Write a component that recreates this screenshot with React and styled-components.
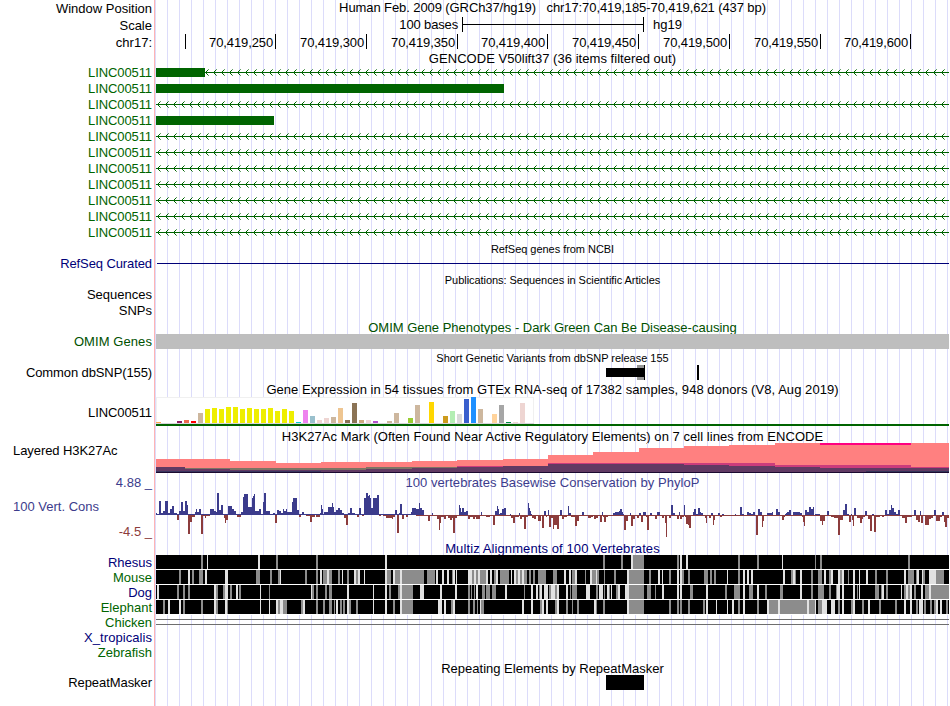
import React from "react";
import styled, { createGlobalStyle } from "styled-components";

const GlobalStyle = createGlobalStyle`
  body { margin: 0; background: #fff; }
`;

const Browser = styled.main`
  width: 950px;
  height: 706px;
  overflow: hidden;
  background: #fff;
  color: #000;
  font: 13px "Liberation Sans", Arial, sans-serif;
  white-space: pre;
`;

const Row = styled.section`
  display: grid;
  grid-template-columns: 155px 794px;
  grid-template-rows: ${(p) => p.$h}px;
  height: ${(p) => p.$h}px;
`;

const LabelCell = styled.div`
  display: flex;
  flex-direction: column;
  box-sizing: border-box;
  justify-content: ${(p) => p.$justify || "center"};
  align-items: ${(p) => (p.$left ? "flex-start" : "flex-end")};
  border-right: 1px solid #ffb4b4;
  padding: ${(p) => p.$top || 0}px 2px ${(p) => p.$bottom || 0}px 13px;
  color: ${(p) => p.$color || "#000"};
`;

const Label = styled.span`
  line-height: 15px;
  letter-spacing: ${(p) => p.$ls ?? 0}px;
  color: ${(p) => p.$color || "inherit"};
  align-self: ${(p) => p.$align || "auto"};
`;

const TrackCell = styled.div`
  display: flex;
  align-items: center;
  justify-content: center;
  padding-left: 1px;
  min-width: 0;
  background: linear-gradient(to right, #dcdcfa 1px, transparent 1px) 12px 0 / 12px 100%;
`;

const Title = styled.h2`
  margin: ${(p) => p.$shift ?? 0}px 0 0;
  font-size: ${(p) => (p.$small ? 11 : 13)}px;
  font-weight: 400;
  line-height: 15px;
  letter-spacing: ${(p) => p.$ls ?? 0}px;
  color: ${(p) => p.$color || "#000"};
`;

const Drawing = styled.svg`
  display: block;
  flex: none;
  width: 793px;
  height: ${(p) => p.$h}px;
  shape-rendering: crispEdges;
`;

const ScaleBar = styled.div`
  display: grid;
  grid-template-columns: 302px 182px auto;
  column-gap: 4px;
  width: 793px;
  height: 17px;
  line-height: 16px;
`;

const ScaleText = styled.span`
  text-align: ${(p) => p.$align};
  padding-left: ${(p) => p.$pad || 0}px;
  letter-spacing: ${(p) => p.$ls ?? 0}px;
`;

const Ruler = styled.div`
  display: grid;
  grid-template-columns: 30px 90px 91px 91px 90px 91px 91px 91px 90px;
  width: 793px;
  height: 17px;
`;

const Tick = styled.span`
  height: 15px;
  line-height: 17px;
  padding-right: 2px;
  border-right: 1px solid #000;
  text-align: right;
  letter-spacing: -0.12px;
`;

function Track({ h, label, color, ls, bottom, children }) {
  return (
    <Row $h={h}>
      <LabelCell $color={color} $bottom={bottom}>{label && <Label $ls={ls}>{label}</Label>}</LabelCell>
      <TrackCell>{children}</TrackCell>
    </Row>
  );
}

const GREEN = "#006400";
const NAVY = "#000078";

const GENES = [
  { bar: 49, line: 49 },
  { bar: 348 },
  { line: 0 },
  { bar: 118 },
  ...Array(7).fill({ line: 0 }),
];

function Gene({ bar, line }) {
  const arrows = [];
  if (line !== undefined) for (let x = line || 1; x < 790; x += 8) arrows.push(x);
  return (
    <Drawing $h={16} viewBox="0 0 793 16">
      {line !== undefined && <rect x={line} y="8" width={793 - line} height="1" fill={GREEN} />}
      <path
        d={arrows.map((x) => `M${x + 1} 7h1v1h-1zM${x + 2} 6h1v1h-1zM${x + 1} 9h1v1h-1zM${x + 2} 10h1v1h-1z`).join("")}
        fill={GREEN}
      />
      <path d={arrows.map((x) => `M${x + 3} 5h1v1h-1zM${x + 3} 11h1v1h-1z`).join("")} fill={GREEN} opacity="0.6" />
      {bar && <rect y="4" width={bar} height="9" fill={GREEN} />}
    </Drawing>
  );
}

/* [tissue index, height, colour] */
const TISSUES = [
  [0, 1, "#ffa54f"], [3, 2, "#8b1c62"], [4, 3, "#ee6a50"], [5, 2, "#ff0000"], [6, 10, "#cdb79e"],
  ...[14, 15, 14, 16, 16, 14, 15, 14, 14, 15, 12, 14, 12].map((h, i) => [7 + i, h, "#eeee00"]),
  [20, 1, "#00cdcd"], [21, 13, "#ee82ee"], [22, 7, "#9ac0cd"], [23, 3, "#eed5d2"], [24, 5, "#eed5d2"],
  [25, 6, "#cdb79e"], [26, 15, "#eec591"], [27, 3, "#8b7355"], [28, 20, "#8b7355"], [29, 3, "#cdaa7d"],
  [30, 3, "#eed5d2"], [31, 2, "#b452cd"], [33, 2, "#cdb79e"], [34, 10, "#cdb79e"], [36, 5, "#9acd32"],
  [37, 18, "#cdb79e"], [39, 21, "#ffd700"], [41, 7, "#cd9b1d"], [42, 12, "#b4eeb4"], [43, 9, "#d9d9d9"],
  [44, 24, "#3a5fcd"], [45, 26, "#1e90ff"], [46, 14, "#cdb79e"], [48, 9, "#ffd39b"], [49, 18, "#a6a6a6"],
  [50, 1, "#008b45"], [51, 1, "#eed5d2"], [52, 20, "#eed5d2"],
];

function Expression() {
  return (
    <Drawing $h={30} viewBox="0 0 793 30">
      <rect width="378" height="27" fill="#f0f0f0" />
      <rect x="1" y="1" width="376" height="25" fill="#fff" />
      {TISSUES.map(([i, h, c]) => (
        <rect key={i} x={i * 7} y={26 - h} width="5" height={h} fill={c} />
      ))}
      <rect y="26" width="378" height="1" fill="#d8d4dc" />
      <rect y="27" width="793" height="2" fill={GREEN} />
    </Drawing>
  );
}

/* Each layer: [start x, top y] steps running to the right edge. */
const steps = (pts, end = 793, bottom = 30) =>
  `M${pts[0][0]} ${bottom}` + pts.map(([x, y], i) => `V${y}H${i + 1 < pts.length ? pts[i + 1][0] : end}`).join("") + `V${bottom}Z`;

const LAYERS = [
  ["#ff8080", [[0, 16], [74, 18], [120, 20], [165, 19], [256, 18], [301, 17], [347, 16], [392, 12], [437, 9], [483, 5], [528, 3], [573, 2], [619, 0]]],
  ["#7d7464", [[0, 25], [29, 25], [210, 24], [301, 25]], 301],
  ["#cc3c7c", [[301, 23], [347, 24], [392, 20], [483, 20], [619, 22], [755, 24]]],
  ["#613a63", [[0, 24], [29, 26], [74, 27], [210, 26], [256, 25], [301, 24], [347, 23], [392, 21], [528, 22], [573, 23], [619, 24], [664, 25]]],
  ["#3a3560", [[0, 28], [165, 29]], 165],
  ["#34345a", [[710, 28]]],
  ["#1b0a30", [[0, 29]]],
];

function Histone() {
  return (
    <Drawing $h={30} viewBox="0 0 793 30">
      {LAYERS.map(([c, pts, end]) => (
        <path key={c} d={steps(pts, end)} fill={c} />
      ))}
      <rect x="664" width="91" height="2" fill="#ff0080" />
    </Drawing>
  );
}

/* Runs are "start end height" in thirds of a pixel across, counted from each segment's origin. */
const CONSERVATION = [
  [-6, `18 21 2,21 27 1,27 33 14,33 39 2,39 45 4,45 54 14,54 60 2,60 66 6,66 72 9,72 78 2,78 81 2,80 87 -5,87 93 4,93 98 13,98 105 4,105 110 14,110 114 10,114 120 -19,120 126 -7,126 135 -2,135 138 3,138 141 6,141 147 3,147 153 6,153 159 -19,159 165 -1,165 168 -3,168 180 -1,180 192 6,192 198 4,198 201 3,201 207 22,207 213 5,213 219 10,219 222 1,222 225 -3,225 228 -8,228 234 -5,234 246 9,246 252 6,252 258 4,261 273 -2,273 279 3,279 282 18,282 294 21,294 306 8,306 309 17,309 312 19,312 315 21,315 327 4,327 333 6,333 339 1,339 342 13,342 348 22,348 360 4,360 366 1,369 375 2,375 381 -8,381 387 5,387 393 4,393 399 2,399 402 6,402 408 4,408 411 6,411 426 3,426 429 13,429 441 17,441 447 5,447 453 -2,453 457 1,457 462 3,462 468 1,468 480 -1,480 486 -7,486 494 -2,498 510 -2,510 513 2,513 516 10,516 519 6,519 522 1,522 534 3,534 546 8,546 549 12,549 552 8,552 558 3,558 564 5,564 570 7,570 576 5,576 582 2,582 588 -3,588 594 -10,594 600 2,600 606 7,606 615 2,615 621 1,621 627 -2,627 633 7,636 641 -1,642 648 17,648 654 22,654 657 19,657 660 20,660 663 17,663 669 7,669 681 17,681 687 20,687 693 -1,693 699 1,699 708 -1,708 726 -3,726 729 -4,729 735 -2,735 741 5,741 747 -18,747 750 2,750 756 11,756 762 -4,765 768 1,768 774 -2,777 783 1,783 786 3,786 798 7,798 807 6,807 810 12`],
  [264, `0 6 7,6 12 5,12 24 -1,24 30 -6,30 36 -1,36 39 2,39 51 -1,51 57 -4,57 60 -15,60 63 -8,63 72 -2,72 78 -4,78 84 -1,84 90 -3,90 96 -5,96 99 -3,99 105 -18,105 111 -3,111 117 -1,117 120 10,120 123 7,123 126 3,126 132 7,132 138 3,138 144 4,144 150 -4,150 159 -2,159 165 -4,165 168 -2,168 180 -4,182 186 3,186 198 -1,198 210 -2,210 218 -1,218 225 -10,225 231 4,231 234 9,234 237 6,237 240 1,240 246 2,246 252 6,252 258 7,258 270 -1,270 273 1,273 279 -3,279 285 -8,285 297 -2,297 300 2,300 306 -4,306 312 -2,312 318 -14,318 324 -2,324 327 12,327 330 7,330 333 4,333 336 1,336 342 -3,342 348 -4,348 354 -1,354 363 -6,366 372 -13,372 378 4,378 381 -2,384 387 5,387 393 -12,393 399 -3,399 402 -14,402 411 -10,411 417 -14,420 426 5,426 432 -4,432 441 -2,444 447 9,447 453 2,453 465 -2,465 471 -11,471 477 -6,477 486 -1,486 492 3,492 498 -1,504 513 -3,513 519 -2,522 528 -4,528 534 -3,540 546 -7,546 549 3,549 552 -2,552 558 -7,558 564 -2,564 579 -1,579 585 2,585 597 3,597 600 4,600 606 6,606 609 3,609 612 1,612 618 -15,618 624 -6,624 630 -1,630 633 2,633 639 -11,639 645 -4,645 651 -1,651 657 -3,657 663 2,663 669 -7,669 672 3,672 678 3,678 681 -2,681 687 -15,687 690 -1,690 696 2,696 705 -1,705 711 -4,711 720 3,720 726 -1,726 732 -3,732 735 -1,735 738 -8,738 741 -22,741 747 -1,747 753 -3,753 759 10,759 765 2,765 771 -1,771 777 -4,777 780 3`],
  [524, `0 6 -4,6 12 -2,12 15 10,15 18 -2,18 24 -9,24 27 -10,27 33 -13,33 36 -1,39 42 3,42 48 6,48 54 1,54 60 7,60 63 3,63 69 2,69 75 -1,75 78 -3,78 81 -8,81 86 -1,86 92 -3,94 98 2,98 101 -10,101 104 -5,104 114 -1,114 120 2,120 126 -2,126 132 1,133 165 -1,165 168 1,171 180 -1,180 186 8,186 192 1,192 198 -1,201 207 3,207 213 2,213 219 1,219 225 3,225 228 -1,228 234 -20,234 240 6,240 246 3,246 249 -12,249 252 -6,252 261 -1,261 276 2,276 279 3,279 288 -1,288 294 6,294 300 3,300 306 -1,306 312 -5,312 315 -2,315 318 1,318 321 2,321 327 3,327 333 5,333 339 -1,339 354 3,354 360 3,360 366 2,366 369 -2,369 372 -7,372 375 -11,375 381 5,381 387 3,387 393 8,393 399 6,399 402 8,402 405 -1,405 420 1,420 426 -6,426 429 -10,429 435 -6,435 438 -1,441 447 4,447 453 -1,453 462 -2,462 474 -3,474 480 -20,480 489 -5,489 495 5,495 501 11,501 507 1,507 513 -7,513 516 1,516 519 -5,519 522 -11,522 528 7,528 531 -1,531 540 -3,540 546 -8,546 549 -4,549 555 -2,555 561 4,564 570 -4,570 576 -16,576 582 1,582 588 -17,588 600 -2,600 606 -1,606 612 -2,615 621 5,621 627 1,627 633 5,633 636 10,636 642 7,642 648 3,648 654 1,654 660 5,660 666 -1,666 675 -3,675 681 -8,681 696 -2,696 702 -1,702 708 5,708 714 -5,714 720 -7,720 723 4,723 729 -8,729 735 -1,735 747 -10,747 753 -4,753 759 -3,759 762 -1,762 768 5,768 780 -6,780 786 -2,786 792 3,792 795 -7,795 801 -12,801 807 -3`],
];

function Conservation() {
  let up = "";
  let down = "";
  CONSERVATION.forEach(([origin, runs]) =>
    runs.split(",").forEach((run) => {
      const [a, b, h] = run.split(" ").map(Number);
      const x = origin + Math.round(a / 3);
      const w = Math.max(1, Math.round(b / 3) - Math.round(a / 3));
      if (h > 0) up += `M${x} ${24 - h}h${w}v${h}h${-w}z`;
      else down += `M${x} 24h${w}v${-h}h${-w}z`;
    })
  );
  return (
    <Drawing $h={50} viewBox="0 0 793 50">
      <path d={up} fill="#3c3c8c" />
      <path d="M0 23H260V24H0z" fill="#3c3c8c" />
      <path d="M260 24H793V25H260z" fill="#8c3c3c" />
      <path d={down} fill="#8c3c3c" />
    </Drawing>
  );
}

/* G: partly aligned, L: weakly aligned; the rest of the strip is fully aligned. */
const SPECIES = [
  ["Rhesus", NAVY, [
    "G153-159 L171-174 L324-330 G378-384 G498-504 L705-711",
    "G549-555 G603-609 L633-639 G639-672 G771-777",
    "L0-6 L18-24 G174-180 G231-237 L306-309 G405-408 G420-426 G684-690",
  ]],
  ["Mouse", GREEN, [
    "G87-93 L114-120 G126-132 G147-159 L165-171 L225-234 G318-330 G360-366 G384-390 L390-393 G465-471 G498-504 L510-516 G519-531 L531-537 G537-546 G564-570 L576-579 G591-597 L612-618 G618-624 L624-630 L642-645 L705-711 G711-723 L729-735 G735-750 L750-756 G756-810",
    "G0-12 G21-45 L48-54 L67-73 L81-87 G96-99 L99-105 L108-111 L144-156 G156-162 L162-168 G168-174 L174-180 G180-198 L198-204 L210-216 G222-228 L228-234 G240-267 L273-276 L282-288 G288-294 L294-300 G300-306 L306-312 G312-321 G327-333 G339-345 G354-378 G399-411 L432-438 L447-453 G456-465 L465-471 G495-498 L510-516 G516-528 L528-531 G531-537 G552-555 G582-588 L621-627 G627-672 G687-693 L714-720 L726-729 G747-753 L771-777",
    "L0-6 G6-12 G24-30 G72-84 G90-96 G102-108 L141-144 G174-180 L189-195 L201-207 L213-219 L309-315 G333-339 L339-345 G345-348 L360-366 G393-399 G414-426 L432-438 G447-453 L453-459 L474-480 G480-486 L486-492 G504-507 L519-525 L537-540 L558-564 G585-591 G618-624 L672-678 G684-702 G708-711 L711-717 L726-729 G729-735 L747-768 G768-792",
  ]],
  ["Dog", NAVY, [
    "L21-27 G81-87 G99-105 G114-120 L192-198 G198-204 G219-225 L225-234 G240-246 L258-264 G267-273 L330-333 G357-360 L483-486 G486-492 G498-504 G525-531 G537-546 L591-597 L669-672 L705-711 G717-723 G744-750 L750-756 G756-789",
    "L0-12 L60-66 L105-111 G144-150 G153-156 G162-165 L168-174 G186-195 G198-210 G216-228 L255-261 G312-315 L333-339 L348-354 G357-360 L360-366 L372-384 G387-393 L393-405 G405-411 L411-417 L438-444 G450-453 G456-471 L498-510 G528-534 L537-549 G552-555 L561-567 G567-570 L573-576 G588-594 L594-600 L615-627 G627-672 G681-693 G705-708 L726-732 L771-777",
    "L0-6 G30-39 L78-84 G135-141 G162-180 L189-195 G207-219 L231-237 G255-261 G300-309 L360-366 G393-399 G414-432 G447-453 G468-471 L471-480 L486-492 L519-525 G531-534 L537-540 G585-597 G603-606 L606-612 G618-624 L663-666 G672-678 L678-684 G684-690 L690-696 G702-708 L723-729 G735-747 L747-753 G753-807",
  ]],
  ["Elephant", GREEN, [
    "G39-45 L54-60 L87-93 G99-105 G153-159 L192-198 G198-204 L225-231 G231-234 L330-333 L357-360 L378-384 G384-390 L390-399 G399-411 G453-459 L459-465 G498-504 G519-525 G537-546 G552-555 L558-564 G570-576 G579-585 L591-597 G597-603 G618-624 L669-672 L705-711 G729-735 L750-756 G756-789",
    "L54-66 L72-78 G93-99 L99-105 G144-150 G159-165 G171-174 L180-183 G183-192 L306-312 L333-339 G360-366 L366-372 L378-384 G405-411 L411-417 G438-444 G456-459 G471-477 L522-528 G528-531 G549-555 L621-627 G627-672 G747-753 G771-777",
    "G0-6 G24-30 G69-75 L78-84 L108-111 L141-144 L156-162 G174-180 L189-195 G231-237 L261-267 G267-294 L294-300 G300-381 L381-387 G387-405 L405-408 G414-426 L426-441 L453-465 G474-480 L486-492 G513-519 L519-525 G546-552 L564-570 G597-603 G645-651 L672-678 L690-696 G708-714 L717-729 G732-738 G750-756 G762-768 L768-774 L780-786 G798-804",
  ]],
];
const ORIGINS = [-6, 264, 524];

function Alignment({ runs }) {
  return (
    <Drawing $h={15} viewBox="0 0 793 15">
      <rect width="793" height="15" fill="#fff" />
      <rect width="793" height="14" fill="#000" />
      {runs.flatMap((list, s) =>
        list.split(" ").map((run) => {
          const [a, b] = run.slice(1).split("-").map((n) => Math.round(n / 3));
          return (
            <rect key={s + run} x={ORIGINS[s] + a} width={b - a} height="14" fill={run[0] === "G" ? "#8c8c8c" : "#e1e1e1"} />
          );
        })
      )}
    </Drawing>
  );
}

export default function App() {
  return (
    <Browser>
      <GlobalStyle />
      <Track h={17} label="Window Position">
        <Title $shift={-2} $ls={-0.09}>Human Feb. 2009 (GRCh37/hg19)   chr17:70,419,185-70,419,621 (437 bp)</Title>
      </Track>
      <Track h={17} label="Scale">
        <ScaleBar>
          <ScaleText $align="right" $ls={-0.15}>100 bases</ScaleText>
          <svg width="182" height="17" viewBox="0 0 182 17" shapeRendering="crispEdges">
            <path d="M0 0h1v7h180v-7h1v15h-1v-7h-180v7h-1z" />
          </svg>
          <ScaleText $align="left" $pad={5}>hg19</ScaleText>
        </ScaleBar>
      </Track>
      <Track h={17} label="chr17:">
        <Ruler>
          <Tick />
          {[250, 300, 350, 400, 450, 500, 550, 600].map((n) => (
            <Tick key={n}>70,419,{n}</Tick>
          ))}
        </Ruler>
      </Track>
      <Track h={13}>
        <Title $shift={2} $ls={0.04}>GENCODE V50lift37 (36 items filtered out)</Title>
      </Track>
      {GENES.map((gene, i) => (
        <Track key={i} h={16} label="LINC00511" color={GREEN} ls={-0.1}>
          <Gene {...gene} />
        </Track>
      ))}
      <Track h={16}>
        <Title $small $shift={3} $ls={-0.04}>RefSeq genes from NCBI</Title>
      </Track>
      <Track h={16} label="RefSeq Curated" color={NAVY} ls={-0.1} bottom={1}>
        <Drawing $h={16} viewBox="0 0 793 16">
          <rect x="1" y="7" width="792" height="1" fill={NAVY} />
        </Drawing>
      </Track>
      <Track h={15}>
        <Title $small $shift={2} $ls={-0.05}>Publications: Sequences in Scientific Articles</Title>
      </Track>
      <Track h={15} label="Sequences" />
      <Track h={16} label="SNPs" />
      <Track h={16}>
        <Title $color="#005000" $shift={3}>OMIM Gene Phenotypes - Dark Green Can Be Disease-causing</Title>
      </Track>
      <Track h={15} label="OMIM Genes" color="#005000" ls={0.08}>
        <Drawing $h={15} viewBox="0 0 793 15">
          <rect width="793" height="15" fill="#bebebe" />
        </Drawing>
      </Track>
      <Track h={16}>
        <Title $small $shift={3} $ls={-0.02}>Short Genetic Variants from dbSNP release 155</Title>
      </Track>
      <Track h={15} label="Common dbSNP(155)" ls={-0.11}>
        <Drawing $h={15} viewBox="0 0 793 15">
          <rect x="481" width="8" height="15" fill="#969696" />
          <path d="M450 3h38v-3h1v15h-1v-3h-38zM541 0h2v15h-2z" />
        </Drawing>
      </Track>
      <Track h={17}>
        <Title $shift={2} $ls={0.055}>Gene Expression in 54 tissues from GTEx RNA-seq of 17382 samples, 948 donors (V8, Aug 2019)</Title>
      </Track>
      <Track h={30} label="LINC00511" ls={-0.1}>
        <Expression />
      </Track>
      <Track h={16}>
        <Title $shift={3} $ls={0.045}>H3K27Ac Mark (Often Found Near Active Regulatory Elements) on 7 cell lines from ENCODE</Title>
      </Track>
      <Row $h={30}>
        <LabelCell $left $justify="flex-start">
          <Label $ls={-0.07}>Layered H3K27Ac</Label>
        </LabelCell>
        <TrackCell>
          <Histone />
        </TrackCell>
      </Row>
      <Track h={18} label="4.88 _" color="#3c3c8c">
        <Title $color="#3c3c8c" $ls={0.04}>100 vertebrates Basewise Conservation by PhyloP</Title>
      </Track>
      <Row $h={50}>
        <LabelCell $justify="space-between" $color="#3c3c8c" $top={8} $bottom={2}>
          <Label $align="flex-start">100 Vert. Cons</Label>
          <Label $color="#8c3c3c">-4.5 _</Label>
        </LabelCell>
        <TrackCell>
          <Conservation />
        </TrackCell>
      </Row>
      <Track h={14}>
        <Title $color={NAVY} $shift={1} $ls={0.1}>Multiz Alignments of 100 Vertebrates</Title>
      </Track>
      {SPECIES.map(([name, color, runs]) => (
        <Track key={name} h={15} label={name} color={color}>
          <Alignment runs={runs} />
        </Track>
      ))}
      <Track h={15} label="Chicken" color={GREEN}>
        <Drawing $h={15} viewBox="0 0 793 15">
          <path d="M0 4h793v1H0zM0 9h793v1H0z" fill="#6e6e6e" />
        </Drawing>
      </Track>
      <Track h={15} label="X_tropicalis" color={NAVY} ls={0.06} />
      <Track h={15} label="Zebrafish" color={GREEN} />
      <Track h={15}>
        <Title $shift={2}>Repeating Elements by RepeatMasker</Title>
      </Track>
      <Track h={15} label="RepeatMasker" ls={-0.06}>
        <Drawing $h={15} viewBox="0 0 793 15">
          <rect x="450" width="38" height="15" />
        </Drawing>
      </Track>
      <Track h={16} />
    </Browser>
  );
}
